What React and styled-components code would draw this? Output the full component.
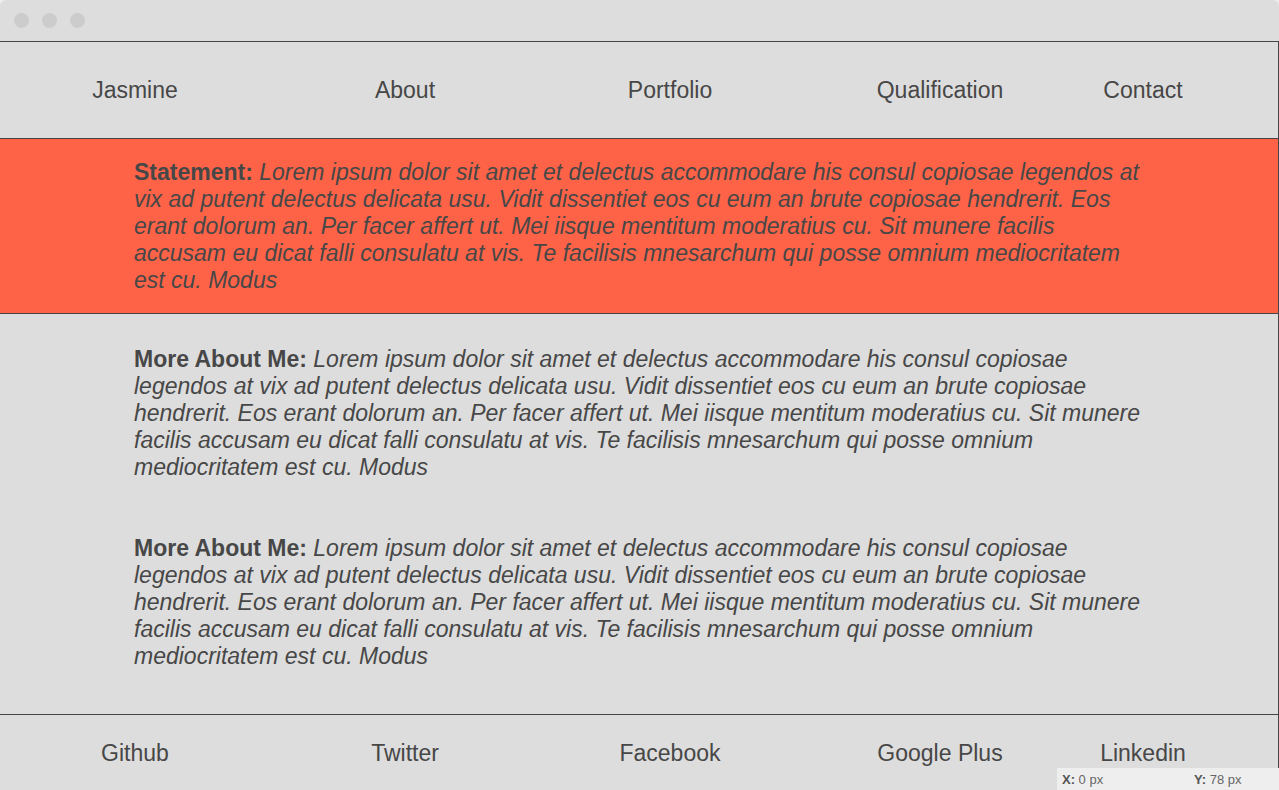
import React from "react";
import styled, { createGlobalStyle } from "styled-components";

const Global = createGlobalStyle`
  html, body { margin: 0; padding: 0; background: #eeeeee; }
  body { font-family: "Liberation Sans", Arial, sans-serif; color: #444; overflow: hidden; }
`;

const Frame = styled.div`
  width: 1279px;
  height: 790px;
  background: #dddddd;
  border-radius: 6px 6px 0 0;
  overflow: hidden;
  position: relative;
`;

const TitleBar = styled.div`
  height: 41px;
  display: flex;
  align-items: center;
  gap: 13px;
  padding-left: 14px;
  box-sizing: border-box;
`;

const Dot = styled.span`
  width: 15px;
  height: 15px;
  border-radius: 50%;
  background: #cccccc;
`;

const Body = styled.div`
  width: 1279px;
  box-sizing: border-box;
  border-top: 1px solid #444;
  border-right: 1px solid #444;
  height: 749px;
`;

const LinkRow = styled.nav`
  display: grid;
  grid-template-columns: 270px 270px 260px 280px 126px;
  align-items: center;
  height: ${(p) => p.$h}px;
  box-sizing: border-box;
  border-bottom: ${(p) => (p.$border ? "1px solid #444" : "none")};
  padding-top: 1px;
`;

const LinkItem = styled.a`
  text-align: center;
  font-size: 23px;
  color: #474747;
  text-decoration: none;
  line-height: 27px;
`;

const Statement = styled.section`
  background: #ff6347;
  border-bottom: 1px solid #444;
  padding: 20px 134px 19px 134px;
`;

const Content = styled.section`
  border-bottom: 1px solid #444;
  padding: 32px 134px 44px 134px;
  display: flex;
  flex-direction: column;
  gap: 54px;
`;

const Para = styled.p`
  margin: 0;
  font-size: 23px;
  line-height: 27px;
  font-style: italic;
  color: #474747;
  width: 1012px;
`;

const Label = styled.strong`
  font-style: normal;
  font-weight: bold;
`;

const Coords = styled.div`
  position: absolute;
  right: 0;
  bottom: 0;
  width: 222px;
  height: 22px;
  background: #eeeeee;
  display: grid;
  grid-template-columns: 132px 1fr;
  align-items: center;
  padding-left: 5px;
  box-sizing: border-box;
  font-size: 13px;
  color: #666;
  b { color: #555; }
`;

const LOREM =
  " Lorem ipsum dolor sit amet et delectus accommodare his consul copiosae legendos at vix ad putent delectus delicata usu. Vidit dissentiet eos cu eum an brute copiosae hendrerit. Eos erant dolorum an. Per facer affert ut. Mei iisque mentitum moderatius cu. Sit munere facilis accusam eu dicat falli consulatu at vis. Te facilisis mnesarchum qui posse omnium mediocritatem est cu. Modus";

const nav = ["Jasmine", "About", "Portfolio", "Qualification", "Contact"];
const social = ["Github", "Twitter", "Facebook", "Google Plus", "Linkedin"];

export default function App() {
  return (
    <>
      <Global />
      <Frame>
        <TitleBar>
          <Dot />
          <Dot />
          <Dot />
        </TitleBar>
        <Body>
          <LinkRow $h={97} $border>
            {nav.map((n) => (
              <LinkItem key={n}>{n}</LinkItem>
            ))}
          </LinkRow>
          <Statement>
            <Para>
              <Label>Statement:</Label>
              {LOREM}
            </Para>
          </Statement>
          <Content>
            <Para>
              <Label>More About Me:</Label>
              {LOREM}
            </Para>
            <Para>
              <Label>More About Me:</Label>
              {LOREM}
            </Para>
          </Content>
          <LinkRow $h={75}>
            {social.map((n) => (
              <LinkItem key={n}>{n}</LinkItem>
            ))}
          </LinkRow>
        </Body>
        <Coords>
          <span><b>X:</b> 0 px</span>
          <span><b>Y:</b> 78 px</span>
        </Coords>
      </Frame>
    </>
  );
}
